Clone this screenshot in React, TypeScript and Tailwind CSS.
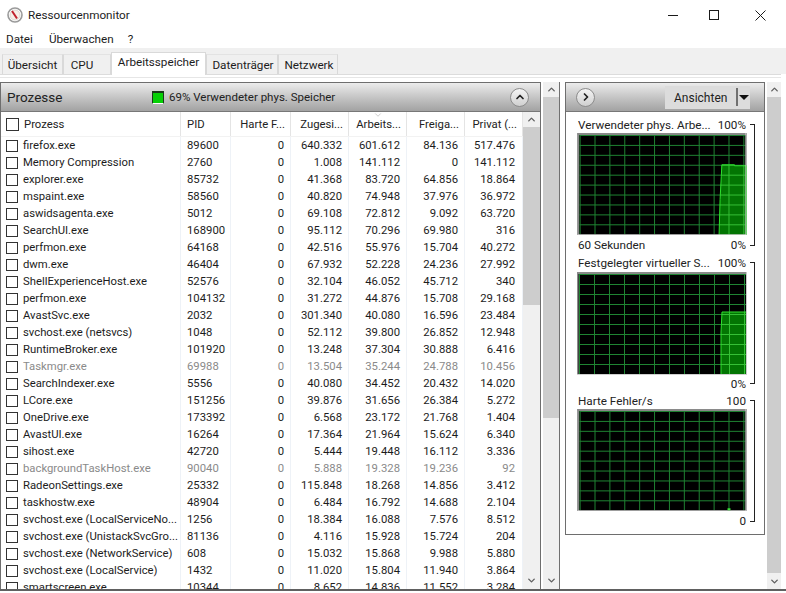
import { ChevronDown, ChevronUp, ChevronRight } from "lucide-react";

type Proc = [string, string, string, string, string, string, string?];

const processes: Proc[] = [
  ["firefox.exe", "89600", "640.332", "601.612", "84.136", "517.476"],
  ["Memory Compression", "2760", "1.008", "141.112", "0", "141.112"],
  ["explorer.exe", "85732", "41.368", "83.720", "64.856", "18.864"],
  ["mspaint.exe", "58560", "40.820", "74.948", "37.976", "36.972"],
  ["aswidsagenta.exe", "5012", "69.108", "72.812", "9.092", "63.720"],
  ["SearchUI.exe", "168900", "95.112", "70.296", "69.980", "316"],
  ["perfmon.exe", "64168", "42.516", "55.976", "15.704", "40.272"],
  ["dwm.exe", "46404", "67.932", "52.228", "24.236", "27.992"],
  ["ShellExperienceHost.exe", "52576", "32.104", "46.052", "45.712", "340"],
  ["perfmon.exe", "104132", "31.272", "44.876", "15.708", "29.168"],
  ["AvastSvc.exe", "2032", "301.340", "40.080", "16.596", "23.484"],
  ["svchost.exe (netsvcs)", "1048", "52.112", "39.800", "26.852", "12.948"],
  ["RuntimeBroker.exe", "101920", "13.248", "37.304", "30.888", "6.416"],
  ["Taskmgr.exe", "69988", "13.504", "35.244", "24.788", "10.456", "gray"],
  ["SearchIndexer.exe", "5556", "40.080", "34.452", "20.432", "14.020"],
  ["LCore.exe", "151256", "39.876", "31.656", "26.384", "5.272"],
  ["OneDrive.exe", "173392", "6.568", "23.172", "21.768", "1.404"],
  ["AvastUI.exe", "16264", "17.364", "21.964", "15.624", "6.340"],
  ["sihost.exe", "42720", "5.444", "19.448", "16.112", "3.336"],
  ["backgroundTaskHost.exe", "90040", "5.888", "19.328", "19.236", "92", "gray"],
  ["RadeonSettings.exe", "25332", "115.848", "18.268", "14.856", "3.412"],
  ["taskhostw.exe", "48904", "6.484", "16.792", "14.688", "2.104"],
  ["svchost.exe (LocalServiceNo...", "1256", "18.384", "16.088", "7.576", "8.512"],
  ["svchost.exe (UnistackSvcGro...", "81136", "4.116", "15.928", "15.724", "204"],
  ["svchost.exe (NetworkService)", "608", "15.032", "15.868", "9.988", "5.880"],
  ["svchost.exe (LocalService)", "1432", "11.020", "15.804", "11.940", "3.864"],
  ["smartscreen.exe", "10344", "8.652", "14.836", "11.552", "3.284"],
];

const tabs = [
  { label: "Übersicht", w: "w-[61px]" },
  { label: "CPU", w: "w-[48px] pr-[10px]" },
  { label: "Arbeitsspeicher", w: "w-[95px]", active: true },
  { label: "Datenträger", w: "w-[72px] pl-[2px]" },
  { label: "Netzwerk", w: "w-[60px] pl-[2px]" },
];

const gridCols = "grid grid-cols-[180px_50px_60px_58px_58px_58px_58px]";

function Scrollbar({ thumb, width, track = "h-0" }: { thumb: string; width: string; track?: string }) {
  return (
    <div className={`${width} ${track} flex flex-col bg-[#f0f0f0] shrink-0`}>
      <div className="h-[15px] flex items-center justify-center shrink-0">
        <ChevronUp size={11} strokeWidth={3} className="text-[#606060]" />
      </div>
      <div className={`${thumb} bg-[#cdcdcd] shrink-0`} />
      <div className="flex-1" />
      <div className="h-[17px] flex items-center justify-center shrink-0">
        <ChevronDown size={11} strokeWidth={3} className="text-[#606060]" />
      </div>
    </div>
  );
}

function GridLines({ color }: { color: string }) {
  const vs = Array.from({ length: 12 }, (_, i) => 2.5 + i * 15);
  const hs = Array.from({ length: 10 }, (_, i) => 2.5 + i * 10);
  return (
    <g stroke={color} strokeWidth="1">
      {vs.map((x) => (
        <line key={x} x1={x} y1="2" x2={x} y2="102" />
      ))}
      {hs.map((y) => (
        <line key={y} x1="2" y1={y} x2="169" y2={y} />
      ))}
    </g>
  );
}

function Graph({ id, area }: { id: string; area?: string }) {
  return (
    <svg width="170" height="103" viewBox="0 0 170 103" className="block">
      <rect width="170" height="103" fill="#000" />
      <GridLines color="#1f8432" />
      {area && (
        <>
          <clipPath id={id}>
            <polygon points={area} />
          </clipPath>
          <polygon points={area} fill="#037503" />
          <g clipPath={`url(#${id})`}>
            <GridLines color="#35c035" />
          </g>
          <polyline points={area} fill="none" stroke="#2fe02f" strokeWidth="1" />
        </>
      )}
      <rect x="0" y="0" width="170" height="2" fill="#8a8a8a" />
      <rect x="0" y="0" width="1.5" height="103" fill="#8a8a8a" />
      <rect x="169" y="0" width="1" height="103" fill="#c8c8c8" />
      <rect x="0" y="102" width="170" height="1" fill="#d0d0d0" />
      {!area && <rect x="151" y="100" width="3" height="2" fill="#38e038" />}
    </svg>
  );
}

function GraphBlock({
  title,
  top,
  footer,
  bottom,
  area,
  id,
  labelH = "h-[17px]",
  footerH = "h-[19px]",
}: {
  title: string;
  top: string;
  footer?: string;
  bottom: string;
  area?: string;
  id: string;
  labelH?: string;
  footerH?: string;
}) {
  return (
    <div className="flex h-[138px]">
      <div className="w-[170px] flex flex-col">
        <div className={`${labelH} flex items-center justify-between px-[1px] pt-[2px] whitespace-nowrap`}>
          <span>{title}</span>
          <span>{top}</span>
        </div>
        <Graph id={id} area={area} />
        <div className={`${footerH} flex items-center justify-between px-[1px] pt-[2px]`}>
          <span>{footer}</span>
          <span>{bottom}</span>
        </div>
      </div>
      <div className="w-[5px] ml-[3px] mt-[8px] mb-[8px] border-t border-b border-r border-[#222]" />
    </div>
  );
}

function RoundButton({ children }: { children: React.ReactNode }) {
  return (
    <div className="w-[19px] h-[19px] rounded-full border border-[#8c8c8c] bg-gradient-to-b from-[#f4f4f4] to-[#d0d0d0] flex items-center justify-center">
      {children}
    </div>
  );
}

export default function App() {
  return (
    <div className="w-[786px] h-[593px] overflow-hidden bg-white flex flex-col text-[11.7px] leading-none text-[#1c1c1c] font-['Roboto',sans-serif]">
      {/* Title bar */}
      <div className="h-[30px] flex items-center shrink-0">
        <svg width="16" height="16" viewBox="0 0 16 16" className="ml-[7px]">
          <circle cx="8" cy="8" r="7" fill="#fff" stroke="#9a9a9a" strokeWidth="1.6" />
          <circle cx="8" cy="8" r="5" fill="#f6efe6" stroke="#c9c2b8" strokeWidth="0.6" />
          <line x1="5" y1="4" x2="10" y2="11.5" stroke="#c0202a" strokeWidth="2" />
        </svg>
        <span className="ml-[5px] pt-[2px]">Ressourcenmonitor</span>
        <div className="ml-auto flex items-center">
          <div className="w-[10px] h-px bg-[#1a1a1a] mr-[31px]" />
          <div className="w-[10px] h-[10px] border border-[#1a1a1a] mr-[36px]" />
          <svg width="11" height="11" viewBox="0 0 11 11" className="mr-[20px]">
            <path d="M0.5 0.5L10.5 10.5M10.5 0.5L0.5 10.5" stroke="#1a1a1a" strokeWidth="1" />
          </svg>
        </div>
      </div>

      {/* Menu */}
      <div className="h-[18px] flex items-center pl-[6px] pt-[2px] shrink-0">
        <span>Datei</span>
        <span className="ml-[16px]">Überwachen</span>
        <span className="ml-[14px]">?</span>
      </div>

      {/* Tabs */}
      <div className="h-[26px] bg-[#f0f0f0] flex items-end pl-[2px] shrink-0">
        {tabs.map((t) =>
          t.active ? (
            <div key={t.label} className={`${t.w} h-[23px] bg-white border border-b-0 border-[#d9d9d9] flex items-center justify-center pb-[2px] relative z-10 -mb-px`}>
              {t.label}
            </div>
          ) : (
            <div key={t.label} className={`${t.w} h-[20px] pt-[2px] border border-b-0 border-l-[#d9d9d9] border-t-[#e3e3e3] border-r-[#d9d9d9] flex items-center justify-center`}>
              {t.label}
            </div>
          )
        )}
      </div>
      <div className="h-[8px] border-t border-[#dcdcdc] shrink-0 mr-[5px]">
        <div className="h-[3px] border-b border-[#e6e6e6]" />
      </div>

      {/* Main */}
      <div className="flex h-[509px] shrink-0 border-b-2 border-[#606060]">
        {/* Process panel */}
        <div className="w-[541px] flex flex-col border-x border-t border-[#6e6e6e] shrink-0 overflow-hidden">
          <div className="h-[29px] flex items-center bg-gradient-to-b from-[#ececec] via-[#c6c6c6] to-[#a2a2a2] border-b border-[#777] shrink-0">
            <span className="ml-[6px] w-[145px] pt-[2px] text-[13.5px] text-[#222]">Prozesse</span>
            <span className="w-[12px] h-[13px] bg-[#05d005] border-t-2 border-x border-[#1a3a1a] border-b border-b-white" />
            <span className="ml-[5px] pt-[2px] text-[11.5px] text-[#222]">69% Verwendeter phys. Speicher</span>
            <div className="ml-auto mr-[11px]">
              <RoundButton>
                <ChevronUp size={12} strokeWidth={3.5} className="text-[#222]" />
              </RoundButton>
            </div>
          </div>
          <div className="flex flex-1 min-h-0 relative text-[11.3px]">
            <div className="flex-1 min-w-0">
              <div className={`${gridCols} h-[25px] items-center border-b border-[#f2f2f2] text-[#222]`}>
                <div className="flex items-center h-full border-r border-[#e4e4e4] pl-[5px]">
                  <span className="w-[13px] h-[13px] border border-[#333] bg-white" />
                  <span className="ml-[5px] pt-[2px]">Prozess</span>
                </div>
                <div className="h-full flex items-center pl-[6px] pt-[2px] border-r border-[#e4e4e4]">PID</div>
                {["Harte F...", "Zugesi...", "Arbeits...", "Freiga...", "Privat (..."].map((h) => (
                  <div key={h} className="h-full flex items-center justify-end pr-[5px] pt-[2px] border-r border-[#e4e4e4]">
                    {h}
                  </div>
                ))}
              </div>
              {processes.map((p, i) => (
                <div key={i} className={`${gridCols} h-[17px] items-center ${p[6] ? "text-[#8a8a8a]" : ""}`}>
                  <div className="flex items-center h-full border-r border-[#eef2f7] pl-[5px] whitespace-nowrap">
                    <span className="w-[12px] h-[12px] border border-[#333] bg-white shrink-0" />
                    <span className="ml-[5px]">{p[0]}</span>
                  </div>
                  <div className="h-full flex items-center pl-[6px] border-r border-[#eef2f7]">{p[1]}</div>
                  <div className="h-full flex items-center justify-end pr-[6px] border-r border-[#eef2f7]">0</div>
                  <div className="h-full flex items-center justify-end pr-[6px] border-r border-[#eef2f7]">{p[2]}</div>
                  <div className="h-full flex items-center justify-end pr-[6px] border-r border-[#eef2f7]">{p[3]}</div>
                  <div className="h-full flex items-center justify-end pr-[6px] border-r border-[#eef2f7]">{p[4]}</div>
                  <div className="h-full flex items-center justify-end pr-[7px] border-r border-[#eef2f7]">{p[5]}</div>
                </div>
              ))}
            </div>
            <Scrollbar width="w-[17px]" track="self-stretch" thumb="h-[178px]" />
            <ChevronDown size={10} strokeWidth={1} className="absolute left-[372px] top-[-2px] text-[#888]" />
          </div>
        </div>

        {/* Outer scrollbar */}
        <div className="ml-[2px] shrink-0 flex">
          <Scrollbar width="w-[16px]" track="self-stretch" thumb="h-[321px]" />
        </div>
        <div className="w-px bg-[#707070] shrink-0" />

        {/* Graph panel */}
        <div className="ml-[5px] w-[200px] h-[453px] border border-[#6e6e6e] shrink-0 flex flex-col text-[#222]">
          <div className="h-[29px] flex items-center bg-gradient-to-b from-[#ececec] via-[#c6c6c6] to-[#a2a2a2] border-b border-[#777] shrink-0">
            <div className="ml-[10px]">
              <RoundButton>
                <ChevronRight size={12} strokeWidth={3.5} className="text-[#222]" />
              </RoundButton>
            </div>
            <div className="ml-auto mr-[14px] w-[85px] h-[23px] bg-[#dcdcdc] flex items-center pl-[9px] text-[12px]">
              <span className="w-[53px] pt-[2px]">Ansichten</span>
              <span className="ml-[9px] w-[2px] h-[18px] bg-[#707070]" />
              <span className="ml-[1px] w-0 h-0 border-x-[5px] border-x-transparent border-t-[5px] border-t-[#111] " />
            </div>
          </div>
          <div className="pl-[11px] pt-[4px] flex flex-col">
            <GraphBlock id="g1" title="Verwendeter phys. Arbe..." top="100%" footer="60 Sekunden" bottom="0%" area="142.5,103 143.5,67 144.7,44 145.3,32 158,32 158,33 170,33 170,103" />
            <GraphBlock id="g2" labelH="h-[18px]" footerH="h-[17px]" title="Festgelegter virtueller S..." top="100%" bottom="0%" area="144,103 144,60 145,40 170,40 170,103" />
            <GraphBlock id="g3" title="Harte Fehler/s" top="100" bottom="0" />
          </div>
        </div>

        {/* Right scrollbar */}
        <div className="ml-[2px] shrink-0 flex">
          <Scrollbar width="w-[14px]" track="self-stretch" thumb="h-[476px]" />
        </div>
      </div>
    </div>
  );
}
